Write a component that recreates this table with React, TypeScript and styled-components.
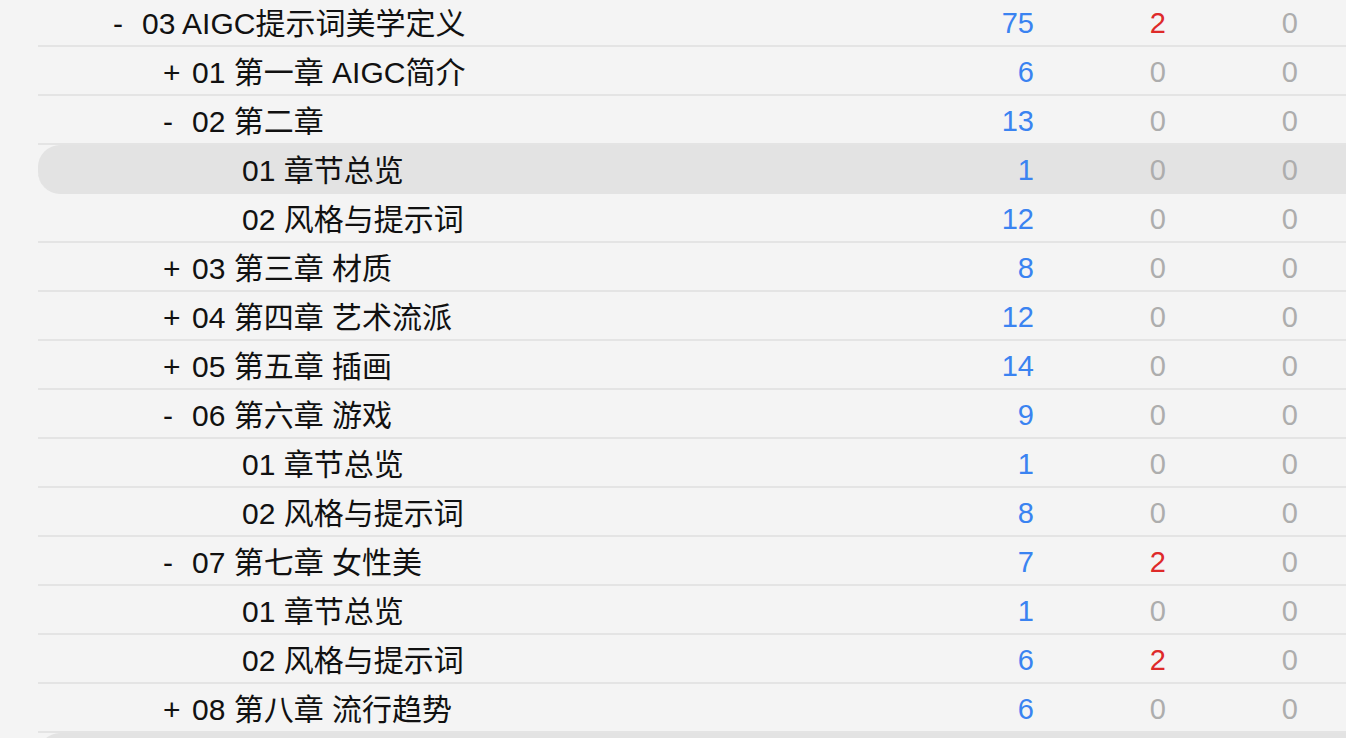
import React from "react";
import styled, { createGlobalStyle } from "styled-components";

const GlobalStyle = createGlobalStyle`
  html, body {
    margin: 0;
    padding: 0;
    background: #f4f4f4;
    overflow: hidden;
  }
  body {
    font-family: "Liberation Sans", "Noto Sans CJK SC", sans-serif;
    -webkit-font-smoothing: antialiased;
  }
`;

type Item = {
  level: number;
  toggle?: "+" | "-";
  title: string;
  total?: number;
  errors?: number;
  other?: number;
  selected?: boolean;
};

const items: Item[] = [
  { level: 0, toggle: "-", title: "03 AIGC提示词美学定义", total: 75, errors: 2, other: 0 },
  { level: 1, toggle: "+", title: "01 第一章 AIGC简介", total: 6, errors: 0, other: 0 },
  { level: 1, toggle: "-", title: "02 第二章", total: 13, errors: 0, other: 0 },
  { level: 2, title: "01 章节总览", total: 1, errors: 0, other: 0, selected: true },
  { level: 2, title: "02 风格与提示词", total: 12, errors: 0, other: 0 },
  { level: 1, toggle: "+", title: "03 第三章 材质", total: 8, errors: 0, other: 0 },
  { level: 1, toggle: "+", title: "04 第四章 艺术流派", total: 12, errors: 0, other: 0 },
  { level: 1, toggle: "+", title: "05 第五章 插画", total: 14, errors: 0, other: 0 },
  { level: 1, toggle: "-", title: "06 第六章 游戏", total: 9, errors: 0, other: 0 },
  { level: 2, title: "01 章节总览", total: 1, errors: 0, other: 0 },
  { level: 2, title: "02 风格与提示词", total: 8, errors: 0, other: 0 },
  { level: 1, toggle: "-", title: "07 第七章 女性美", total: 7, errors: 2, other: 0 },
  { level: 2, title: "01 章节总览", total: 1, errors: 0, other: 0 },
  { level: 2, title: "02 风格与提示词", total: 6, errors: 2, other: 0 },
  { level: 1, toggle: "+", title: "08 第八章 流行趋势", total: 6, errors: 0, other: 0 },
  { level: 1, title: "", selected: true },
];

const Tree = styled.div`
  margin-top: -2px;
  padding-left: 38px;
  display: flex;
  flex-direction: column;
`;

const Row = styled.div<{ $selected?: boolean }>`
  display: grid;
  grid-template-columns: 1fr 132px 132px 132px 48px;
  align-items: start;
  height: 49px;
  flex: none;
  padding-top: 4px;
  box-sizing: border-box;
  border-bottom: 2px solid ${(p) => (p.$selected ? "#e3e3e3" : "#e4e4e4")};
  background: ${(p) => (p.$selected ? "#e3e3e3" : "transparent")};
  border-radius: ${(p) => (p.$selected ? "22px 0 0 22px" : "0")};
  font-size: 29px;
  line-height: 43px;
  color: #111;
`;

const Name = styled.div<{ $level: number }>`
  display: flex;
  align-items: center;
  padding-left: ${(p) => 75 + p.$level * 50}px;
  white-space: nowrap;
  font-size: 30px;
`;

const Toggle = styled.span`
  display: inline-block;
  width: 29px;
  flex: none;
`;

const Count = styled.div<{ $tone: "blue" | "red" | "gray" }>`
  text-align: right;
  color: ${(p) =>
    p.$tone === "blue" ? "#3a83f1" : p.$tone === "red" ? "#de2a2a" : "#adadad"};
`;

const tone = (n: number) => (n > 0 ? "red" : "gray");

export default function App() {
  return (
    <>
      <GlobalStyle />
      <Tree>
        {items.map((it, i) => (
          <Row key={i} $selected={it.selected}>
            <Name $level={it.level}>
              <Toggle>{it.toggle ?? ""}</Toggle>
              <span>{it.title}</span>
            </Name>
            <Count $tone="blue">{it.total ?? ""}</Count>
            <Count $tone={tone(it.errors ?? 0)}>{it.errors ?? ""}</Count>
            <Count $tone={tone(it.other ?? 0)}>{it.other ?? ""}</Count>
            <div />
          </Row>
        ))}
      </Tree>
    </>
  );
}
